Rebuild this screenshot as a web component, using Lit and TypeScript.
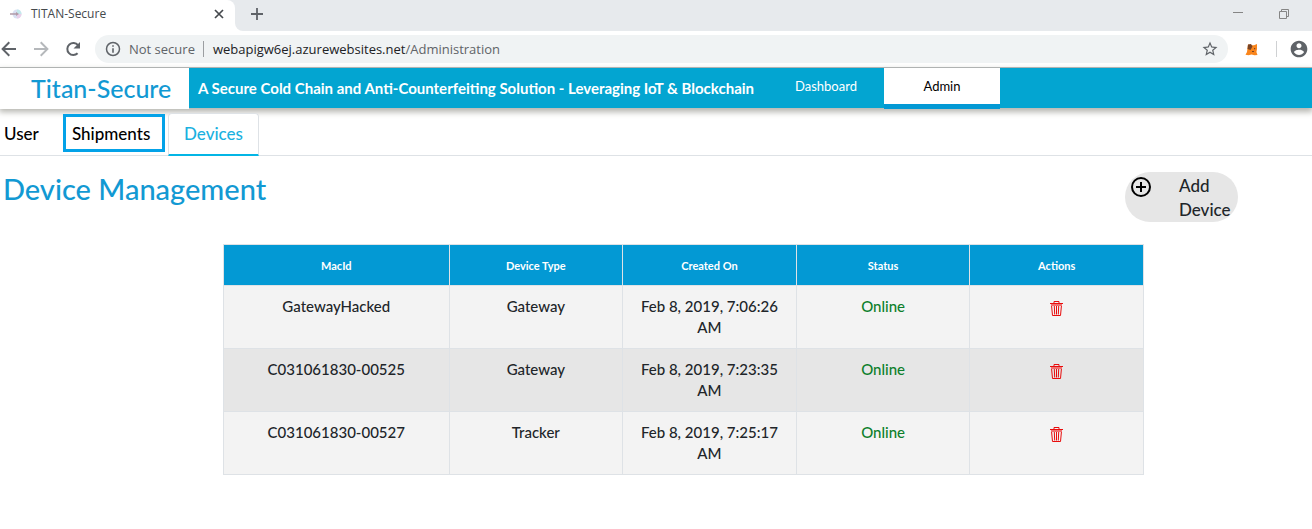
import { LitElement, html, css, svg } from "lit";
import { customElement, state } from "lit/decorators.js";

interface Device {
  mac: string;
  type: string;
  created: string;
  status: string;
}

const devices: Device[] = [
  { mac: "GatewayHacked", type: "Gateway", created: "Feb 8, 2019, 7:06:26 AM", status: "Online" },
  { mac: "C031061830-00525", type: "Gateway", created: "Feb 8, 2019, 7:23:35 AM", status: "Online" },
  { mac: "C031061830-00527", type: "Tracker", created: "Feb 8, 2019, 7:25:17 AM", status: "Online" },
];

const icon = (size: number, body: unknown, box = 24) =>
  html`<svg width=${size} height=${size} viewBox="0 0 ${box} ${box}" aria-hidden="true">${body}</svg>`;

@customElement("browser-chrome")
export class BrowserChrome extends LitElement {
  static styles = css`
    :host { display: block; font-family: "Open Sans", "Noto Sans", sans-serif; color: #5f6368; }
    svg { display: block; fill: currentColor; flex: none; }
    button { border: 0; background: none; padding: 0; margin: 0; color: inherit; display: flex; flex: none; }
    .strip { display: flex; height: 31px; background: #e7eaed; align-items: stretch; }
    .tab { display: flex; align-items: center; box-sizing: border-box; width: 235px; padding: 0 10px 4px 9px; gap: 9px; background: #fff; box-shadow: 8px -8px 0 #e7eaed; border-radius: 0 8px 0 0; font-size: 12px; color: #45494d; }
    .tab-title { flex: 1; }
    .rest { flex: 1; display: flex; align-items: center; padding: 0 23px 4px 14px; background: #e7eaed; border-radius: 0 0 0 8px; }
    .spacer { flex: 1; }
    .window { display: flex; gap: 36px; color: #858585; }
    .under { flex: 1; display: flex; background: #fff; overflow: hidden; }
    .bar { display: flex; align-items: center; height: 36px; background: #fff; border-bottom: 1px solid #b0b3b3; }
    .nav { display: flex; gap: 14px; padding-right: 13px; }
    .muted { color: #b5b8bb; }
    .omni { flex: 1; display: flex; align-items: center; height: 28px; border-radius: 14px; background: #f0f3f4; padding: 0 9px; font-size: 13px; min-width: 0; }
    .secure { padding: 0 8px 0 7px; }
    .divider { width: 1px; height: 16px; background: #9b9ea1; }
    .url { flex: 1; min-width: 0; padding: 0 9px; white-space: nowrap; }
    .host { color: #202124; }
    .ext { display: flex; align-items: center; gap: 12px; padding: 0 3px 0 17px; }
    .line { width: 1px; height: 16px; margin-left: 5px; background: #cfd1d3; }
  `;

  render() {
    return html`
      <div class="strip">
        <div class="under">
          <div class="tab">
            <svg width="13" height="12" viewBox="0 0 13 12" aria-hidden="true">
              <circle cx="8" cy="6" r="4.5" fill="#d9e0f2" />
              <path d="M8 1.500a4.500 4.500 0 0 1 4.500 4.500H8z" fill="#c3e9ec" />
              <path d="M8 10.500A4.500 4.500 0 0 0 12.500 6H8z" fill="#e9d0ea" />
              <path d="M1 5.200h6V4l3 2-3 2V6.800H1z" fill="#b19aa8" />
            </svg>
            <span class="tab-title">TITAN-Secure</span>
            <button aria-label="Close tab">${icon(12, svg`<path d="M2 2l8 8M10 2l-8 8" stroke="currentColor" stroke-width="1.700" />`, 12)}</button>
          </div>
          <div class="rest">
            <button aria-label="New tab">${icon(16, svg`<path d="M8 2v12M2 8h12" stroke="currentColor" stroke-width="1.800" />`, 16)}</button>
            <span class="spacer"></span>
            <div class="window">
              <button aria-label="Minimize">${icon(10, svg`<path d="M0 3.500h10" stroke="currentColor" />`, 10)}</button>
              <button aria-label="Restore">${icon(10, svg`<path d="M.5 2.500h7v7h-7zM2.500 2.500v-2h7v7h-2" fill="none" stroke="currentColor" />`, 10)}</button>
            </div>
          </div>
        </div>
      </div>
      <div class="bar">
        <div class="nav">
          <button aria-label="Back">${icon(18, svg`<path d="M16 8v2H5l5 5-1.400 1.400L1.200 9l7.400-7.400L10 3 5 8z" />`, 18)}</button>
          <button class="muted" aria-label="Forward">${icon(18, svg`<path d="M2 8v2h11l-5 5 1.400 1.400L16.800 9 9.400 1.600 8 3l5 5z" />`, 18)}</button>
          <button aria-label="Reload">${icon(18, svg`<path d="M13.600 13.200A6 6 0 1 1 14 5.200" fill="none" stroke="currentColor" stroke-width="2" /><path d="M16 2v6.500H9.500z" />`, 18)}</button>
        </div>
        <div class="omni">
          ${icon(18, svg`<circle cx="9" cy="9" r="6.500" fill="none" stroke="currentColor" stroke-width="1.500" /><path d="M8.200 5.200h1.600v1.600H8.200zM8.200 8.200h1.600v4.600H8.200z" />`, 18)}
          <span class="secure">Not secure</span>
          <span class="divider"></span>
          <span class="url"><span class="host">webapigw6ej.azurewebsites.net</span>/Administration</span>
          <button aria-label="Bookmark this page">${icon(18, svg`<path d="M22 9.240l-7.190-.62L12 2 9.190 8.630 2 9.240l5.460 4.730L5.820 21 12 17.270 18.180 21l-1.630-7.030L22 9.240zM12 15.400l-3.760 2.270 1-4.280-3.320-2.880 4.380-.38L12 6.100l1.710 4.040 4.380.38-3.320 2.880 1 4.280L12 15.400z" />`)}</button>
        </div>
        <div class="ext">
          <button aria-label="Extension">
            <svg width="14" height="13" viewBox="0 0 14 13" aria-hidden="true">
              <path d="M3 1.500l3 .8h3l3-1.300v5l-.6 3 1.100 3-3 .3-3-.8-3 .8-3-.5 1.500-2.800z" fill="#f9851c" />
              <path d="M3 1.500l3-.5 1.500 2.500L5.500 7 2.500 6z" fill="#7a4322" />
              <path d="M9 5h1.200v1.200H9zM7 8h2v1H7z" fill="#7a4322" />
            </svg>
          </button>
          <span class="line"></span>
          <button aria-label="Profile">${icon(20, svg`<path d="M12 2C6.480 2 2 6.480 2 12s4.480 10 10 10 10-4.480 10-10S17.520 2 12 2zm0 3c1.660 0 3 1.340 3 3s-1.340 3-3 3-3-1.340-3-3 1.340-3 3-3zm0 14.200c-2.500 0-4.710-1.280-6-3.220.03-1.990 4-3.080 6-3.080 1.990 0 5.970 1.090 6 3.080-1.290 1.940-3.500 3.220-6 3.220z" />`)}</button>
        </div>
      </div>
    `;
  }
}

@customElement("app-root")
export class AppRoot extends LitElement {
  @state() private rows = devices;

  static styles = css`
    :host { display: block; font-family: Lato, "Open Sans", sans-serif; color: #212529; background: #fff; }
    button { font: inherit; color: inherit; border: 0; background: none; padding: 0; cursor: pointer; }
    a { text-decoration: none; color: inherit; }
    svg { display: block; }
    .header { display: flex; height: 40px; background: #03a5d1; box-shadow: 0 3px 6px 1px #b5b5af; }
    .brand { box-sizing: border-box; width: 189px; height: 41px; padding-left: 31px; background: #fff; color: #1299d3; font-size: 25px; line-height: 41px; font-weight: 500; white-space: nowrap; flex: none; }
    .tagline { margin: 0; padding-left: 9px; width: 570px; color: #fff; font-size: 15px; line-height: 41px; font-weight: 700; white-space: nowrap; }
    .menu { display: flex; font-size: 13px; line-height: 37px; text-align: center; }
    .menu-link { width: 116px; color: #fff; }
    .menu-link.active { height: 36px; background: #fff; color: #000; border-bottom: 5px solid #0399d4; }
    .tabs { display: flex; align-items: flex-start; gap: 3px; margin-top: 5px; height: 42px; border-bottom: 1px solid #dee2e6; font-size: 17px; line-height: 24px; font-weight: 500; color: #000; }
    .tab { box-sizing: border-box; height: 43px; padding: 9px 0 0 4px; }
    .user { width: 60px; }
    .shipments { width: 102px; height: 38px; margin-top: 1px; padding: 5px 0 0 6px; border: 3px solid #03a2e8; }
    .current { width: 91px; padding: 8px 0 0; text-align: center; color: #1bb1e0; background: #fff; border: 1px solid #dee2e6; border-bottom: 2px solid #03b5e5; border-radius: 4px 4px 0 0; }
    .title-row { display: flex; justify-content: space-between; align-items: flex-start; padding: 16px 74px 0 3px; }
    .title { margin: 0; font-size: 29px; line-height: 34px; font-weight: 500; color: #1299d3; }
    .add { display: flex; justify-content: space-between; align-items: flex-start; box-sizing: border-box; width: 113px; padding: 2px 8px 0 6px; height: 50px; border-radius: 25px; background: #e6e6e6; font-size: 17px; line-height: 24px; font-weight: 500; text-align: left; }
    .add-icon { margin-top: 3px; }
    .add-text { width: 51px; }
    .grid { margin: 22px 0 0 17%; width: 70.2%; border-collapse: collapse; table-layout: fixed; text-align: center; font-size: 15px; line-height: 21px; font-weight: 500; }
    .first { width: 24.4%; }
    .grid th, .grid td { border: 1px solid #dee2e6; }
    .grid th { height: 40px; padding: 0; background: #0399d4; color: #fff; font-size: 11px; font-weight: 700; }
    .grid td { height: 42px; padding: 10px 12px; vertical-align: top; background: #f3f3f3; }
    .grid tr:nth-child(even) td { background: #e6e6e6; }
    .grid .online { color: #0d7f2b; }
    .trash { display: inline-block; vertical-align: top; margin-top: 5px; }
  `;

  private row(d: Device) {
    return html`<tr>
      <td>${d.mac}</td>
      <td>${d.type}</td>
      <td>${d.created}</td>
      <td class="online">${d.status}</td>
      <td>
        <button class="trash" aria-label="Delete ${d.mac}" @click=${() => (this.rows = this.rows.filter((r) => r !== d))}>
          <svg width="13" height="15" viewBox="0 0 13 15" fill="none" stroke="#e80c0c" aria-hidden="true">
            <path d="M4 2V.5h5V2" />
            <path d="M0 2.500h13M1.500 4l1 10.500h8l1-10.500" />
            <path d="M1 3h11v2H1z" fill="#f07070" stroke="none" />
            <path d="M4.300 5l.4 8.500M6.500 5v8.500M8.700 5l-.4 8.500" />
          </svg>
        </button>
      </td>
    </tr>`;
  }

  render() {
    return html`
      <browser-chrome></browser-chrome>
      <header class="header">
        <div class="brand">Titan-Secure</div>
        <p class="tagline">A Secure Cold Chain and Anti-Counterfeiting Solution - Leveraging IoT &amp; Blockchain</p>
        <nav class="menu">
          <a class="menu-link" href="#dashboard">Dashboard</a>
          <a class="menu-link active" href="#admin">Admin</a>
        </nav>
      </header>
      <nav class="tabs">
        <a class="tab user" href="#user">User</a>
        <a class="tab shipments" href="#shipments">Shipments</a>
        <a class="tab current" href="#devices">Devices</a>
      </nav>
      <main>
        <div class="title-row">
          <h1 class="title">Device Management</h1>
          <button class="add">
            <svg class="add-icon" width="20" height="20" viewBox="0 0 20 20" fill="none" stroke="#000" stroke-width="2" aria-hidden="true">
              <circle cx="10" cy="10" r="9" /><path d="M10 5v10M5 10h10" />
            </svg>
            <span class="add-text">Add Device</span>
          </button>
        </div>
        <table class="grid">
          <thead>
            <tr>
              <th class="first">MacId</th>
              <th>Device Type</th>
              <th>Created On</th>
              <th>Status</th>
              <th>Actions</th>
            </tr>
          </thead>
          <tbody>${this.rows.map((d) => this.row(d))}</tbody>
        </table>
      </main>
    `;
  }
}
